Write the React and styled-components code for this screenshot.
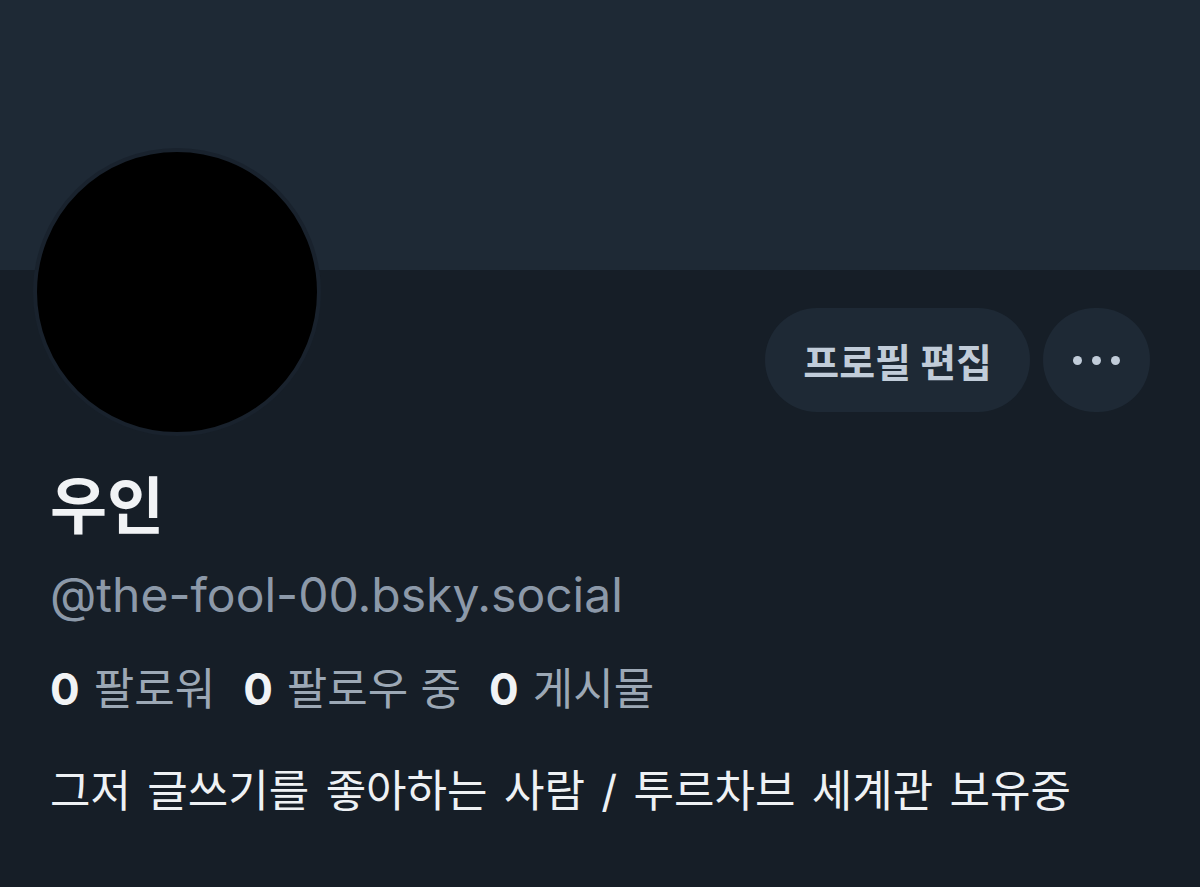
import React from 'react';
import styled, { createGlobalStyle } from 'styled-components';

const GlobalStyle = createGlobalStyle`
  html, body {
    margin: 0;
    padding: 0;
    background: #161e27;
  }
  body {
    font-family: "Inter", "Noto Sans CJK KR", sans-serif;
    -webkit-font-smoothing: antialiased;
  }
`;

const Page = styled.div`
  width: 1200px;
  height: 887px;
  overflow: hidden;
  background: #161e27;
`;

const Banner = styled.div`
  height: 270px;
  background: #1e2935;
`;

const Content = styled.div`
  padding: 0 50px;
`;

const TopRow = styled.div`
  display: flex;
  justify-content: space-between;
  align-items: flex-start;
`;

const Avatar = styled.div`
  width: 280px;
  height: 280px;
  border-radius: 50%;
  background: #000;
  border: 4px solid #19222d;
  margin: -122px 0 0 -17px;
`;

const Actions = styled.div`
  display: flex;
  gap: 13px;
  margin-top: 38px;
`;

const PillButton = styled.button`
  height: 104px;
  padding: 0 ${(p) => (p.$round ? '0' : '38px')};
  width: ${(p) => (p.$round ? '107px' : 'auto')};
  border: none;
  border-radius: 52px;
  background: #1e2935;
  color: #c1ccd9;
  font-family: "Inter", "Noto Sans CJK KR", sans-serif;
  font-size: 39px;
  font-weight: 700;
  display: flex;
  align-items: center;
  justify-content: center;
  gap: 10px;
`;

const Dot = styled.span`
  width: 9px;
  height: 9px;
  border-radius: 50%;
  background: #c1ccd9;
`;

const Name = styled.h1`
  margin: 30px 0 0;
  font-size: 62px;
  line-height: 82px;
  font-weight: 700;
  color: #f1f3f5;
`;

const Handle = styled.div`
  margin-top: 18px;
  font-size: 48px;
  line-height: 58px;
  color: #8c99a9;
`;

const Stats = styled.div`
  display: flex;
  gap: 28px;
  margin-top: 39px;
  font-size: 44px;
  line-height: 52px;
`;

const Stat = styled.span`
  color: #9ca8b5;
  b {
    color: #f1f3f5;
    font-weight: 700;
    margin-right: 14px;
  }
`;

const Bio = styled.p`
  margin: 48px 0 0;
  font-size: 44px;
  line-height: 56px;
  color: #eef1f4;
  word-spacing: 4px;
`;

export default function App() {
  return (
    <>
      <GlobalStyle />
      <Page>
        <Banner />
        <Content>
          <TopRow>
            <Avatar />
            <Actions>
              <PillButton>프로필 편집</PillButton>
              <PillButton $round aria-label="더보기">
                <Dot />
                <Dot />
                <Dot />
              </PillButton>
            </Actions>
          </TopRow>
          <Name>우인</Name>
          <Handle>@the-fool-00.bsky.social</Handle>
          <Stats>
            <Stat><b>0</b>팔로워</Stat>
            <Stat><b>0</b>팔로우 중</Stat>
            <Stat><b>0</b>게시물</Stat>
          </Stats>
          <Bio>그저 글쓰기를 좋아하는 사람 / 투르차브 세계관 보유중</Bio>
        </Content>
      </Page>
    </>
  );
}
